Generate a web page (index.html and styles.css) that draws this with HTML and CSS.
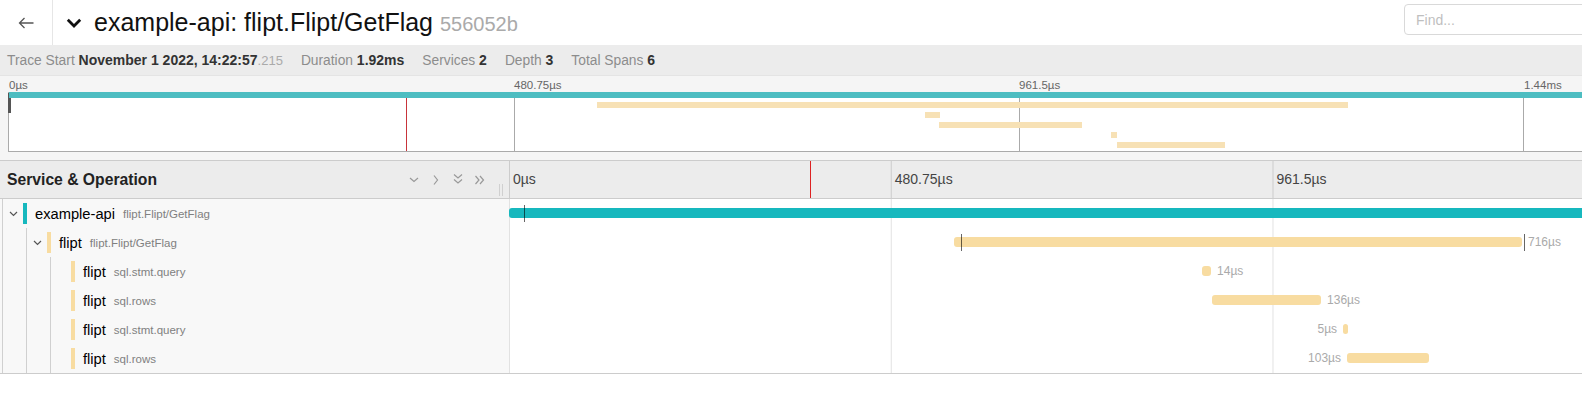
FILE: index.html
```html
<!DOCTYPE html>
<html lang="en">
<head>
    <meta charset="UTF-8">
    <meta name="viewport" content="width=device-width, initial-scale=1.0">
    <title>example-api: flipt.Flipt/GetFlag</title>
    <link rel="stylesheet" href="styles.css">
</head>
<body>
<div class="trace-page">

    <!-- Title row -->
    <div class="title-row">
        <a class="back-btn" href="#">
            <svg width="16" height="12" viewBox="0 0 16 12"><path d="M15.5 6H1.5M6.5 1L1.5 6l5 5" fill="none" stroke="#555" stroke-width="1.3"/></svg>
        </a>
        <h1 class="trace-title">
            <svg class="title-toggle" width="16" height="10" viewBox="0 0 16 10"><path d="M1.8 1.8L8 8l6.2-6.2" fill="none" stroke="#111" stroke-width="2.8"/></svg>
            <span>example-api: flipt.Flipt/GetFlag <small class="trace-id">556052b</small></span>
        </h1>
        <input class="find" type="text" placeholder="Find...">
    </div>

    <!-- Overview -->
    <ul class="overview">
        <li>Trace Start <strong>November 1 2022, 14:22:57<span class="ms">.215</span></strong></li>
        <li>Duration <strong>1.92ms</strong></li>
        <li>Services <strong>2</strong></li>
        <li>Depth <strong>3</strong></li>
        <li>Total Spans <strong>6</strong></li>
    </ul>

    <!-- Minimap -->
    <div class="minimap">
        <div class="mini-ticks">
            <span class="mini-label" style="left:0%">0µs</span>
            <span class="mini-label" style="left:25%">480.75µs</span>
            <span class="mini-label" style="left:50%">961.5µs</span>
            <span class="mini-label" style="left:75%">1.44ms</span>
        </div>
        <div class="mini-graph">
            <i class="mini-tick" style="left:25%"></i>
            <i class="mini-tick" style="left:50%"></i>
            <i class="mini-tick" style="left:75%"></i>
            <i class="mini-cursor" style="left:19.65%"></i>
            <i class="mini-handle"></i>
            <div class="mini-row"><b class="mini-bar teal" style="left:0%;width:100%"></b></div>
            <div class="mini-row"><b class="mini-bar yellow" style="left:29.14%;width:37.2%"></b></div>
            <div class="mini-row"><b class="mini-bar yellow" style="left:45.38%;width:0.72%"></b></div>
            <div class="mini-row"><b class="mini-bar yellow" style="left:46.04%;width:7.1%"></b></div>
            <div class="mini-row"><b class="mini-bar yellow" style="left:54.6%;width:0.3%"></b></div>
            <div class="mini-row"><b class="mini-bar yellow" style="left:54.88%;width:5.35%"></b></div>
        </div>
    </div>

    <!-- Timeline -->
    <div class="timeline">
        <div class="tl-header">
            <div class="tl-name">
                <h3>Service &amp; Operation</h3>
                <div class="tl-actions">
                    <svg width="14" height="14" viewBox="0 0 14 14"><path d="M3 5l4 3.5L11 5" /></svg>
                    <svg width="14" height="14" viewBox="0 0 14 14"><path d="M5 2.5L8.5 7 5 11.5" /></svg>
                    <svg width="14" height="14" viewBox="0 0 14 14"><path d="M3 1.5L7 5l4-3.5M3 6.5L7 10l4-3.5" /></svg>
                    <svg width="14" height="14" viewBox="0 0 14 14"><path d="M2.5 3L6 7l-3.5 4M7 3l3.5 4L7 11" /></svg>
                </div>
                <span class="col-resizer"></span>
            </div>
            <div class="tl-time">
                <span class="tick-label" style="left:0%">0µs</span>
                <span class="tick-label" style="left:25%">480.75µs</span>
                <span class="tick-label" style="left:50%">961.5µs</span>
                <i class="cursor" style="left:19.7%"></i>
            </div>
        </div>

        <div class="span-row">
            <div class="span-name">
                <span class="toggle"><svg width="9" height="6" viewBox="0 0 9 6"><path d="M1 1l3.5 3.5L8 1" /></svg></span>
                <span class="svc-mark teal"></span>
                <span class="svc">example-api</span>
                <span class="op">flipt.Flipt/GetFlag</span>
            </div>
            <div class="span-time">
                <div class="bar teal" style="left:0%;width:100%"></div>
                <i class="log" style="left:0.98%"></i>
            </div>
        </div>

        <div class="span-row">
            <div class="span-name">
                <span class="indent"></span>
                <span class="toggle"><svg width="9" height="6" viewBox="0 0 9 6"><path d="M1 1l3.5 3.5L8 1" /></svg></span>
                <span class="svc-mark yellow"></span>
                <span class="svc">flipt</span>
                <span class="op">flipt.Flipt/GetFlag</span>
            </div>
            <div class="span-time">
                <div class="bar yellow" style="left:29.14%;width:37.2%"></div>
                <i class="log" style="left:29.6%"></i>
                <i class="log" style="left:66.47%"></i>
                <span class="dur" style="left:66.34%">716µs</span>
            </div>
        </div>

        <div class="span-row">
            <div class="span-name">
                <span class="indent"></span><span class="indent"></span>
                <span class="toggle"></span>
                <span class="svc-mark yellow"></span>
                <span class="svc">flipt</span>
                <span class="op">sql.stmt.query</span>
            </div>
            <div class="span-time">
                <div class="bar yellow" style="left:45.38%;width:0.6%"></div>
                <span class="dur" style="left:45.98%">14µs</span>
            </div>
        </div>

        <div class="span-row">
            <div class="span-name">
                <span class="indent"></span><span class="indent"></span>
                <span class="toggle"></span>
                <span class="svc-mark yellow"></span>
                <span class="svc">flipt</span>
                <span class="op">sql.rows</span>
            </div>
            <div class="span-time">
                <div class="bar yellow" style="left:46.04%;width:7.14%"></div>
                <span class="dur" style="left:53.18%">136µs</span>
            </div>
        </div>

        <div class="span-row">
            <div class="span-name">
                <span class="indent"></span><span class="indent"></span>
                <span class="toggle"></span>
                <span class="svc-mark yellow"></span>
                <span class="svc">flipt</span>
                <span class="op">sql.stmt.query</span>
            </div>
            <div class="span-time">
                <div class="bar yellow" style="left:54.62%;width:0.33%"></div>
                <span class="dur dur-left" style="right:45.38%">5µs</span>
            </div>
        </div>

        <div class="span-row">
            <div class="span-name">
                <span class="indent"></span><span class="indent"></span>
                <span class="toggle"></span>
                <span class="svc-mark yellow"></span>
                <span class="svc">flipt</span>
                <span class="op">sql.rows</span>
            </div>
            <div class="span-time">
                <div class="bar yellow" style="left:54.88%;width:5.37%"></div>
                <span class="dur dur-left" style="right:45.12%">103µs</span>
            </div>
        </div>
    </div>

</div>
</body>
</html>
```

FILE: styles.css
```css
html, body {
    margin: 0;
    padding: 0;
    overflow: hidden; /* the trace page is wider than the window */
}

body {
    font-family: 'Liberation Sans', Arial, sans-serif;
    color: #000;
    background: #fff;
}

.trace-page {
    width: 2036px;
}

/* Title row */
.title-row {
    display: flex;
    align-items: center;
    height: 45px;
}

.back-btn {
    flex: none;
    width: 53px;
    height: 45px;
    display: flex;
    align-items: center;
    justify-content: center;
    border-right: 1px solid #e6e6e6;
    box-sizing: border-box;
}

.trace-title {
    display: flex;
    align-items: center;
    margin: 0 0 0 13px;
    font-size: 25px;
    font-weight: normal;
    line-height: 1;
    color: #111;
}

.title-toggle {
    margin-right: 12px;
}

.trace-id {
    font-size: 20px;
    color: #aaa;
}

.find {
    align-self: flex-start;
    margin: 4px 382px 0 auto;
    width: 250px;
    height: 31px;
    box-sizing: border-box;
    padding: 0 11px;
    border: 1px solid #d9d9d9;
    border-radius: 4px;
    font-family: inherit;
    font-size: 14px;
}

.find::placeholder {
    color: #bfbfbf;
}

/* Overview */
.overview {
    display: flex;
    align-items: center;
    gap: 18px;
    height: 30px;
    margin: 0;
    padding: 0 7px;
    list-style: none;
    background: #ececec;
    border-bottom: 1px solid #e4e4e4;
    font-size: 13.8px;
    color: #8c8c8c;
}

.overview strong {
    font-size: 14px;
    color: #333;
}

.overview .ms {
    font-size: 13px;
    font-weight: normal;
    color: #aaa;
}

/* Minimap */
.minimap {
    padding: 0 8px 8px;
    background: #f5f5f5;
}

.mini-ticks {
    position: relative;
    height: 16px;
    font-size: 11.5px;
    color: #666;
}

.mini-label {
    position: absolute;
    top: 3px;
    margin-left: 1px;
    line-height: 12px;
}

.mini-graph {
    position: relative;
    height: 59px;
    background: #fff;
    border-left: 1px solid #aaa;
    border-bottom: 1px solid #aaa;
}

.mini-tick {
    position: absolute;
    top: 0;
    bottom: 0;
    width: 1px;
    background: #aaa;
}

.mini-cursor {
    position: absolute;
    top: 0;
    bottom: 0;
    width: 1px;
    background: #c8343a;
}

.mini-handle {
    position: absolute;
    left: -1px;
    top: 1px;
    width: 3px;
    height: 20px;
    background: #555;
}

.mini-row {
    position: relative;
    height: 10px;
}

.mini-bar {
    position: absolute;
    top: 0;
    height: 6px;
}

.mini-bar.teal { background: #4dbdc1; }
.mini-bar.yellow { background: #f7e1b5; }

/* Timeline */
.timeline {
    border-top: 1px solid #ccc;
    border-bottom: 1px solid #ccc;
}

.tl-header {
    display: flex;
    height: 37px;
    background: #ececec;
    border-bottom: 1px solid #ccc;
}

.tl-name {
    position: relative;
    flex: none;
    width: 509px;
    display: flex;
    align-items: center;
    padding: 0 22px 0 7px;
    box-sizing: border-box;
}

.tl-name h3 {
    flex: 1;
    margin: 0;
    font-size: 15.7px;
    font-weight: bold;
    color: #222;
}

.tl-actions {
    display: flex;
    gap: 8px;
}

.tl-actions svg path {
    fill: none;
    stroke: #999;
    stroke-width: 1.2;
}

.col-resizer {
    position: absolute;
    right: 6px;
    top: 23px;
    width: 2px;
    height: 12px;
    border-left: 1px solid #d0d0d0;
    border-right: 1px solid #d0d0d0;
}

.tl-time {
    position: relative;
    flex: 1;
    overflow: hidden;
    background-image: linear-gradient(to right, #ccc 1px, transparent 1px);
    background-size: 25% 100%;
}

.tick-label {
    position: absolute;
    top: 0;
    margin-left: 4px;
    line-height: 37px;
    font-size: 14px;
    color: #444;
}

.cursor {
    position: absolute;
    top: 0;
    bottom: 0;
    width: 1px;
    background: #d22;
}

/* Span rows */
.span-row {
    display: flex;
    height: 29px;
}

.span-name {
    flex: none;
    width: 509px;
    display: flex;
    align-items: center;
    background: #f8f8f8;
    white-space: nowrap;
}

.span-name::before {
    content: "";
    align-self: stretch;
    width: 1px;
    margin-left: 2px;
    background: #d0d0d0;
}

.indent {
    flex: none;
    align-self: stretch;
    width: 23px;
    border-right: 1px solid #d0d0d0;
}

.toggle {
    flex: none;
    width: 20px;
    display: flex;
    justify-content: center;
}

.toggle svg path {
    fill: none;
    stroke: #555;
    stroke-width: 1.2;
}

.svc-mark {
    flex: none;
    align-self: stretch;
    width: 4px;
    margin: 4px 0;
}

.svc-mark.teal { background: #17b8be; }
.svc-mark.yellow { background: #f8dca1; }

.svc {
    margin-left: 8px;
    font-size: 14.7px;
    color: #000;
}

.op {
    margin-left: 8px;
    font-size: 11.5px;
    color: #808080;
}

.span-time {
    position: relative;
    flex: 1;
    overflow: hidden;
    background-image: linear-gradient(to right, #e2e2e2 1px, transparent 1px);
    background-size: 25% 100%;
}

.bar {
    position: absolute;
    top: 9px;
    height: 10px;
    min-width: 2px;
    border-radius: 3px;
}

.bar.teal { background: #17b8be; }
.bar.yellow { background: #f8dca1; }

.log {
    position: absolute;
    top: 6px;
    height: 17px;
    width: 1px;
    background: rgba(0, 0, 0, 0.6);
}

.dur {
    position: absolute;
    top: 8px;
    padding: 0 6px;
    font-size: 12px;
    line-height: 12px;
    color: #aaa;
    white-space: nowrap;
}
```
